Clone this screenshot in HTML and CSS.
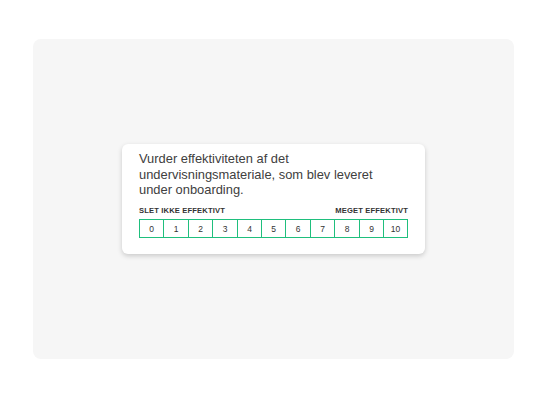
FILE: index.html
```html
<!DOCTYPE html>
<html>
<head>
<meta charset="utf-8">
<link rel="stylesheet" href="styles.css">
</head>
<body>
<div class="panel">
  <div class="card">
    <p class="question">Vurder effektiviteten af det undervisningsmateriale, som blev leveret under onboarding.</p>
    <div class="labels"><span>SLET IKKE EFFEKTIVT</span><span>MEGET EFFEKTIVT</span></div>
    <div class="scale">
      <div class="cell">0</div><div class="cell">1</div><div class="cell">2</div><div class="cell">3</div><div class="cell">4</div><div class="cell">5</div><div class="cell">6</div><div class="cell">7</div><div class="cell">8</div><div class="cell">9</div><div class="cell">10</div>
    </div>
  </div>
</div>
</body>
</html>
```

FILE: styles.css
```css
html, body {
  margin: 0;
  padding: 0;
  background: #ffffff;
}
body {
  width: 547px;
  height: 400px;
  padding-top: 39px;
  box-sizing: border-box;
  font-family: "Liberation Sans", Arial, sans-serif;
}
.panel {
  margin-left: 33px;
  width: 481px;
  height: 320px;
  background: #f6f6f6;
  border-radius: 8px;
  display: flex;
  align-items: center;
  justify-content: center;
}
.card {
  width: 303px;
  box-sizing: border-box;
  background: #ffffff;
  border-radius: 6px;
  box-shadow: 0 2px 5px rgba(0,0,0,0.18);
  padding: 7px 17px 16px 17px;
}
.question {
  margin: 0;
  font-size: 12.9px;
  line-height: 15.5px;
  color: #404040;
}
.labels {
  display: flex;
  justify-content: space-between;
  margin-top: 8.5px;
  font-size: 7.6px;
  letter-spacing: 0.15px;
  font-weight: bold;
  color: #333;
  line-height: 9px;
}
.scale {
  display: grid;
  grid-template-columns: 23px 24px 23px 24px 23px 23px 24px 23px 24px 23px 23px;
  justify-content: start;
  margin-top: 4px;
  padding: 1px;
  column-gap: 1px;
  background: #1fbf7d;
}
.cell {
  height: 17px;
  background: #ffffff;
  display: flex;
  align-items: center;
  justify-content: center;
  font-size: 8.5px;
  color: #333;
}
```
